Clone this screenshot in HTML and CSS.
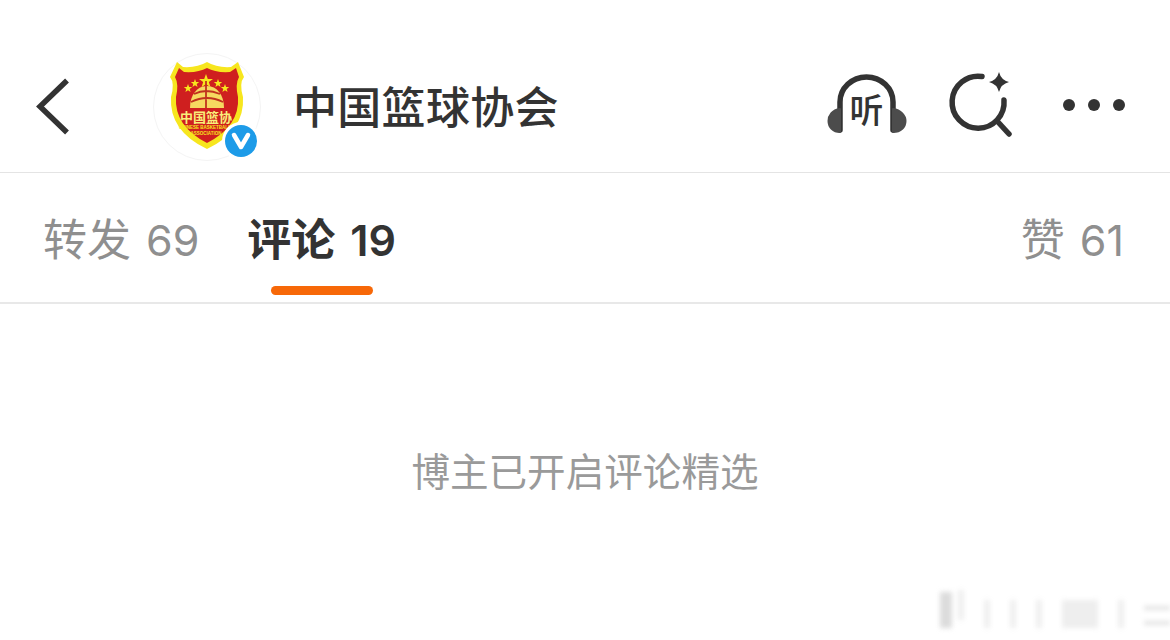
FILE: index.html
```html
<!DOCTYPE html>
<html lang="zh-CN">
<head>
    <meta charset="UTF-8">
    <title>中国篮球协会</title>
    <link rel="stylesheet" href="styles.css">
</head>
<body>
    <div class="page">
        <div class="header">
            <svg class="back" width="36" height="60" viewBox="0 0 36 60">
                <path d="M32 3.500 L5 29.500 L32 55.500" fill="none" stroke="#333" stroke-width="5.500"/>
            </svg>
            <div class="avatar">
                <svg width="108" height="108" viewBox="0 0 108 108">
                    <path d="M24 9 L30 14 Q44 15 54 9 Q64 15 78 14 L85 9 L91 24 Q86 30 90 44 Q92 78 54 96 Q16 78 18 44 Q22 30 17 24 Z" fill="#f7e61e"/>
                    <path d="M26 15 L31 19 Q45 20 54 15 Q63 20 77 19 L83 15 L86 24 Q82 31 85 44 Q87 73 54 90 Q21 73 23 44 Q26 31 22 24 Z" fill="#cf1f1f"/>
                    <path d="M53 21l1.800 5h5.200l-4.200 3 1.700 5.200-4.500-3.200-4.500 3.200 1.700-5.200-4.200-3h5.200z" fill="#f7e61e"/>
                    <path d="M42 26l1.100 3h3.100l-2.500 1.900.9 3.100-2.600-1.800-2.600 1.800.9-3.100-2.500-1.900h3.100zM65 26l1.100 3h3.100l-2.500 1.900.9 3.100-2.600-1.800-2.600 1.800.9-3.100-2.500-1.900h3.100zM35 31l1.100 3h3.100l-2.500 1.900.9 3.100-2.600-1.800-2.600 1.800.9-3.100-2.500-1.900h3.100zM72 31l1.100 3h3.100l-2.500 1.900.9 3.100-2.600-1.800-2.600 1.800.9-3.100-2.500-1.900h3.100z" fill="#f7e61e"/>
                    <path d="M37 55 C37 42 44 33 54 33 C64 33 71 42 71 55 Z" fill="#f6d860"/>
                    <path d="M53 28 V55 M41 41 Q53 35 67 41 M38 49 Q54 41 70 49" stroke="#c0321e" stroke-width="1.800" fill="none"/>
                    <text class="logo-cn" x="53" y="69" text-anchor="middle">中国篮协</text>
                    <text class="logo-en" x="52" y="76" text-anchor="middle">CHINESE BASKETBALL</text>
                    <text class="logo-en" x="53" y="82" text-anchor="middle">ASSOCIATION</text>
                </svg>
                <svg class="verified" width="38" height="38" viewBox="0 0 38 38">
                    <circle cx="19" cy="19" r="19" fill="#fff"/>
                    <circle cx="19" cy="19" r="16" fill="#1d9be8"/>
                    <path d="M12 13 L19 25 L26 13" fill="none" stroke="#fff" stroke-width="4.500" stroke-linejoin="round" stroke-linecap="round"/>
                </svg>
            </div>
            <div class="name">中国篮球协会</div>
            <div class="header-icons">
                <svg width="80" height="60" viewBox="0 0 80 60">
                    <path d="M13 56 V28 A26.500 25 0 0 1 66 28 V56" fill="none" stroke="#333" stroke-width="5.500" stroke-linecap="round"/>
                    <path d="M13 35 C5 36 1.500 42 1.500 47 C1.500 53 6 58 13 58 Z M66 35 C74 36 78.500 42 78.500 47 C78.500 53 74 58 66 58 Z" fill="#4c4c4c" stroke="#4c4c4c" stroke-width="2" stroke-linejoin="round"/>
                    <text class="listen" x="39.500" y="49" text-anchor="middle">听</text>
                </svg>
                <svg width="64" height="66" viewBox="0 0 64 66">
                    <path d="M34 5.500 A26 26 0 1 0 56 29" fill="none" stroke="#333" stroke-width="5.500" stroke-linecap="round"/>
                    <path d="M50 51 L61 63" stroke="#333" stroke-width="5.500" stroke-linecap="round"/>
                    <path d="M51 1 Q53 9 61 11 Q53 13 51 21 Q49 13 41 11 Q49 9 51 1 Z" fill="#333"/>
                </svg>
                <div class="more"><i></i><i></i><i></i></div>
            </div>
        </div>
        <div class="tabs">
            <div class="tab">转发<span class="num">69</span></div>
            <div class="tab active">评论<span class="num">19</span></div>
            <div class="tab right">赞<span class="num">61</span></div>
        </div>
        <div class="empty">博主已开启评论精选</div>
        <div class="watermark"><i></i><i></i><i></i><i></i><i></i><i></i><i></i><i></i></div>
    </div>
</body>
</html>
```
FILE: styles.css
```css
* {
    box-sizing: border-box;
}
html, body {
    margin: 0;
    height: 100%;
    overflow: hidden;
}
body {
    background: #fff;
    color: #333;
    font-family: "Noto Sans CJK SC", "Liberation Sans", sans-serif;
}
.page {
    position: relative;
    width: 1170px;
    height: 640px;
}
.header {
    display: flex;
    align-items: center;
    height: 173px;
    padding: 41px 45px 0 35px;
    border-bottom: 1px solid #e4e4e4;
}
.back {
    margin-right: 82px;
    flex: none;
}
.avatar {
    position: relative;
    width: 108px;
    height: 108px;
    border: 1px solid #f4f4f4;
    border-radius: 50%;
    flex: none;
}
.avatar svg:first-child {
    display: block;
    margin: -1px;
}
.verified {
    position: absolute;
    right: 0;
    bottom: 0;
}
.logo-cn {
    font-size: 13px;
    font-weight: 700;
    fill: #f9ef7a;
}
.logo-en {
    font-family: "Liberation Sans", sans-serif;
    font-size: 4.500px;
    font-weight: 700;
    fill: #f7e61e;
}
.name {
    margin: 0 0 3px 32px;
    font-size: 44px;
    font-weight: 500;
    line-height: 60px;
    letter-spacing: 0.300px;
    color: #333;
}
.header-icons {
    display: flex;
    align-items: center;
    margin-left: auto;
    margin-bottom: 5px;
    gap: 41px;
}
.listen {
    font-size: 34px;
    font-weight: 500;
    fill: #333;
}
.more {
    display: flex;
    gap: 13px;
    margin-left: 10px;
    margin-top: 1px;
}
.more i {
    width: 12px;
    height: 12px;
    border-radius: 50%;
    background: #333;
}
.tabs {
    display: flex;
    height: 131px;
    padding: 0 46px 0 43px;
    border-bottom: 2px solid #e8e8e8;
    gap: 48px;
}
.tab {
    position: relative;
    padding-top: 32px;
    font-size: 44px;
    line-height: 64px;
    color: #8f8f8f;
    white-space: nowrap;
}
.num {
    font-family: Inter, "Liberation Sans", sans-serif;
    font-size: 43px;
    margin-left: 15px;
}
.tab.active {
    color: #333;
    font-weight: 700;
}
.tab.active .num {
    font-weight: 600;
}
.tab.active::after {
    content: "";
    position: absolute;
    left: 24px;
    bottom: 7px;
    width: 102px;
    height: 9px;
    border-radius: 5px;
    background: #f76808;
}
.tab.right {
    margin-left: auto;
}
.empty {
    margin-top: 133px;
    text-align: center;
    font-size: 38.600px;
    line-height: 64px;
    color: #9a9a9a;
}
.watermark {
    position: absolute;
    left: 940px;
    top: 592px;
    display: flex;
    height: 36px;
    filter: blur(2.500px);
}
.watermark i {
    width: 6px;
    margin-left: 20px;
    margin-top: 8px;
    background: #eee;
}
.watermark i:first-child {
    width: 12px;
    margin: 0;
    background: #dcdcdc;
}
.watermark i:nth-child(2) {
    margin: -2px 0 8px 6px;
}
.watermark i:nth-child(6) {
    width: 36px;
}
.watermark i:last-child {
    width: 26px;
    height: 4px;
    margin-top: 14px;
    background: #e2e2e2;
    box-shadow: 0 15px 0 #e2e2e2;
}
```
